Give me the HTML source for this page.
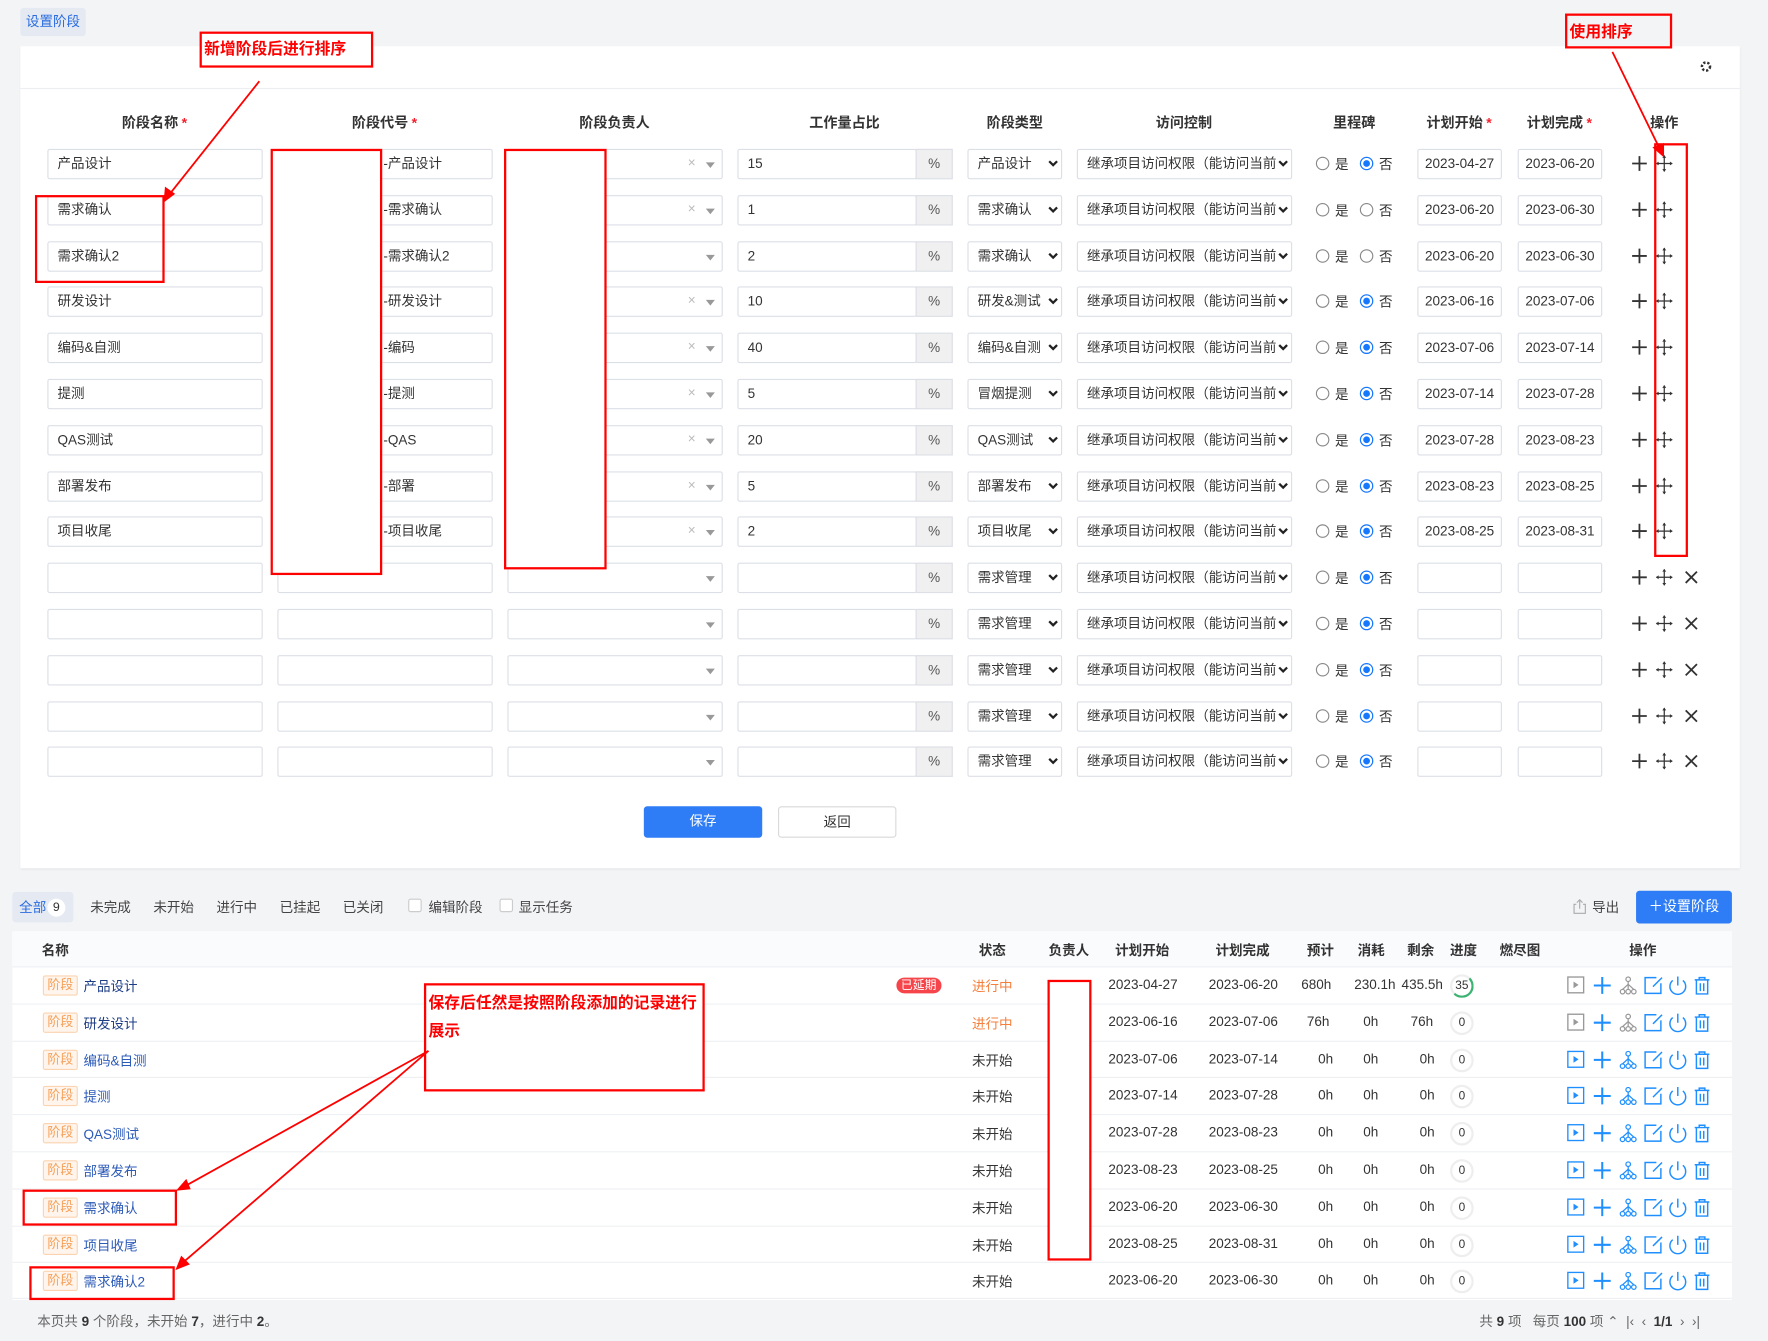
<!DOCTYPE html>
<html><head><meta charset="utf-8">
<style>
*{box-sizing:border-box;margin:0;padding:0}
body{width:1768px;height:1341px;overflow:hidden;background:#f3f4f6;font-family:"Liberation Sans","Noto Sans CJK SC",sans-serif;color:#333}
#w{position:absolute;left:0;top:0;width:1568px;height:1189px;transform:scale(1.12755);transform-origin:0 0;font-size:12px}
.a{position:absolute}
.card{position:absolute;left:18px;top:41px;width:1525px;height:729px;background:#fff;box-shadow:0 1px 2px rgba(0,0,0,.06)}
.hd{position:absolute;top:98px;font-weight:bold;font-size:12.5px;color:#333;transform:translateX(-50%);white-space:nowrap}
.hd i{color:#f5222d;font-style:normal;margin-left:3px}
.r{position:absolute;left:0;width:1568px;height:27px}
.in{position:absolute;top:0;height:27px;border:1px solid #dcdfe6;background:#fff;border-radius:2px;line-height:25px;padding-left:8px;white-space:nowrap;overflow:hidden;font-size:12px;color:#333}
.n{left:42px;width:191px}.c{left:246px;width:191px;padding-left:93px}.o{left:450px;width:191px}.wl{left:654px;width:159px}
.pc{position:absolute;left:812px;top:0;width:33px;height:27px;border:1px solid #dcdfe6;background:#f0f0f0;text-align:center;line-height:25px;color:#555}
.t{left:858px;width:84px}.ac{left:955px;width:191px;padding-right:14px}
.ds{left:1257px;width:75px;text-align:center;padding-left:0}.de{left:1346px;width:75px;text-align:center;padding-left:0}
.cv{position:absolute;top:9px;width:10px;height:8px}
.ox{position:absolute;left:610px;top:5px;color:#bbb;font-size:12px}
.oc{position:absolute;left:626px;top:12px;width:0;height:0;border-left:4px solid transparent;border-right:4px solid transparent;border-top:5px solid #999}
.rd{position:absolute;top:7px;width:12px;height:12px;border-radius:50%;border:1px solid #888;background:#fff}
.rd.on{border:1px solid #1677ff;box-shadow:inset 0 0 0 2px #fff;background:#1677ff}
.rl{position:absolute;top:5px;font-size:12px;color:#333}
.ic{position:absolute;top:5px}
.rb{position:absolute;border:2px solid #f00}
.btn{position:absolute;height:28px;border-radius:3px;text-align:center;line-height:27px;font-size:12px}
.tb{position:absolute;top:796px;font-size:12px;color:#444}
.tbl{position:absolute;left:11px;top:826px;width:1525px;height:327px;background:#fff}
.th{position:absolute;top:834px;font-size:12px;font-weight:bold;color:#333;white-space:nowrap}
.br{position:absolute;left:11px;width:1525px;height:32.8px;border-top:1px solid #eef0f3;font-size:12px}
.br>*{position:absolute;top:8px;white-space:nowrap}
.tag{left:27px;top:7px!important;border:1px solid #fbd3b0;background:#fff5ec;color:#f5a05a;font-size:11.5px;padding:0 3px;height:18px;line-height:16px;border-radius:2px}
.nm{left:63px;color:#2d5bb8}
.st{left:851px}
.d1{left:972px}.d2{left:1061px}
.pg{left:1275px;top:6px!important;width:21px;height:21px;border-radius:50%;border:2px solid #eee;text-align:center;line-height:17px;font-size:10.5px}
.ops{left:1378px;top:7px!important}
</style></head><body><div id="w">

<div class="a" style="left:18px;top:7px;width:58px;height:25px;background:#e4e9f2;border-radius:3px;color:#2a6ce0;text-align:center;line-height:24px;font-size:12px">设置阶段</div>

<div class="card">
 <div class="a" style="left:0;top:37px;width:1525px;height:1px;background:#eceef1"></div>
 <svg class="a" style="left:1489px;top:12px" width="12" height="12" viewBox="0 0 12 12"><circle cx="6" cy="6" r="3.6" fill="none" stroke="#333" stroke-width="2.2" stroke-dasharray="2 1.6"/><circle cx="6" cy="6" r="1.3" fill="#fff"/></svg>
</div>

<div class="hd" style="left:137px">阶段名称<i>*</i></div>
<div class="hd" style="left:341px">阶段代号<i>*</i></div>
<div class="hd" style="left:545px">阶段负责人</div>
<div class="hd" style="left:749px">工作量占比</div>
<div class="hd" style="left:900px">阶段类型</div>
<div class="hd" style="left:1050px">访问控制</div>
<div class="hd" style="left:1201px">里程碑</div>
<div class="hd" style="left:1294px">计划开始<i>*</i></div>
<div class="hd" style="left:1383px">计划完成<i>*</i></div>
<div class="hd" style="left:1476px">操作</div>

<svg width="0" height="0" style="position:absolute"><defs>
<symbol id="cv" viewBox="0 0 10 8"><path d="M1.5 2 L5 5.5 L8.5 2" fill="none" stroke="#222" stroke-width="2"/></symbol>
<symbol id="pl" viewBox="0 0 16 16"><path d="M8 1.5V14.5M1.5 8H14.5" stroke="#333" stroke-width="1.6"/></symbol>
<symbol id="mv" viewBox="0 0 16 16"><path d="M8 1V15M1 8H15" stroke="#333" stroke-width="1.1"/><path d="M8 0.5L6.3 3H9.7ZM8 15.5L6.3 13H9.7ZM0.5 8L3 6.3V9.7ZM15.5 8L13 6.3V9.7Z" fill="#333"/></symbol>
<symbol id="xx" viewBox="0 0 16 16"><path d="M3 3L13 13M13 3L3 13" stroke="#333" stroke-width="1.6"/></symbol>
</defs></svg>

<div class="r" style="top:132px"><div class="in n">产品设计</div><div class="in c">-产品设计</div><div class="in o"></div><span class="ox">×</span><span class="oc"></span><div class="in wl">15</div><div class="pc">%</div><div class="in t">产品设计</div><svg class="cv" style="left:929px"><use href="#cv"/></svg><div class="in ac">继承项目访问权限（能访问当前</div><svg class="cv" style="left:1133px"><use href="#cv"/></svg><span class="rd" style="left:1167px"></span><span class="rl" style="left:1184px">是</span><span class="rd on" style="left:1206px"></span><span class="rl" style="left:1223px">否</span><div class="in ds">2023-04-27</div><div class="in de">2023-06-20</div><svg class="ic" style="left:1446px" width="16" height="16"><use href="#pl"/></svg><svg class="ic" style="left:1468px" width="16" height="16"><use href="#mv"/></svg></div>
<div class="r" style="top:172.8px"><div class="in n">需求确认</div><div class="in c">-需求确认</div><div class="in o"></div><span class="ox">×</span><span class="oc"></span><div class="in wl">1</div><div class="pc">%</div><div class="in t">需求确认</div><svg class="cv" style="left:929px"><use href="#cv"/></svg><div class="in ac">继承项目访问权限（能访问当前</div><svg class="cv" style="left:1133px"><use href="#cv"/></svg><span class="rd" style="left:1167px"></span><span class="rl" style="left:1184px">是</span><span class="rd" style="left:1206px"></span><span class="rl" style="left:1223px">否</span><div class="in ds">2023-06-20</div><div class="in de">2023-06-30</div><svg class="ic" style="left:1446px" width="16" height="16"><use href="#pl"/></svg><svg class="ic" style="left:1468px" width="16" height="16"><use href="#mv"/></svg></div>
<div class="r" style="top:213.6px"><div class="in n">需求确认2</div><div class="in c">-需求确认2</div><div class="in o"></div><span class="oc"></span><div class="in wl">2</div><div class="pc">%</div><div class="in t">需求确认</div><svg class="cv" style="left:929px"><use href="#cv"/></svg><div class="in ac">继承项目访问权限（能访问当前</div><svg class="cv" style="left:1133px"><use href="#cv"/></svg><span class="rd" style="left:1167px"></span><span class="rl" style="left:1184px">是</span><span class="rd" style="left:1206px"></span><span class="rl" style="left:1223px">否</span><div class="in ds">2023-06-20</div><div class="in de">2023-06-30</div><svg class="ic" style="left:1446px" width="16" height="16"><use href="#pl"/></svg><svg class="ic" style="left:1468px" width="16" height="16"><use href="#mv"/></svg></div>
<div class="r" style="top:254.4px"><div class="in n">研发设计</div><div class="in c">-研发设计</div><div class="in o"></div><span class="ox">×</span><span class="oc"></span><div class="in wl">10</div><div class="pc">%</div><div class="in t">研发&amp;测试</div><svg class="cv" style="left:929px"><use href="#cv"/></svg><div class="in ac">继承项目访问权限（能访问当前</div><svg class="cv" style="left:1133px"><use href="#cv"/></svg><span class="rd" style="left:1167px"></span><span class="rl" style="left:1184px">是</span><span class="rd on" style="left:1206px"></span><span class="rl" style="left:1223px">否</span><div class="in ds">2023-06-16</div><div class="in de">2023-07-06</div><svg class="ic" style="left:1446px" width="16" height="16"><use href="#pl"/></svg><svg class="ic" style="left:1468px" width="16" height="16"><use href="#mv"/></svg></div>
<div class="r" style="top:295.2px"><div class="in n">编码&amp;自测</div><div class="in c">-编码</div><div class="in o"></div><span class="ox">×</span><span class="oc"></span><div class="in wl">40</div><div class="pc">%</div><div class="in t">编码&amp;自测</div><svg class="cv" style="left:929px"><use href="#cv"/></svg><div class="in ac">继承项目访问权限（能访问当前</div><svg class="cv" style="left:1133px"><use href="#cv"/></svg><span class="rd" style="left:1167px"></span><span class="rl" style="left:1184px">是</span><span class="rd on" style="left:1206px"></span><span class="rl" style="left:1223px">否</span><div class="in ds">2023-07-06</div><div class="in de">2023-07-14</div><svg class="ic" style="left:1446px" width="16" height="16"><use href="#pl"/></svg><svg class="ic" style="left:1468px" width="16" height="16"><use href="#mv"/></svg></div>
<div class="r" style="top:336px"><div class="in n">提测</div><div class="in c">-提测</div><div class="in o"></div><span class="ox">×</span><span class="oc"></span><div class="in wl">5</div><div class="pc">%</div><div class="in t">冒烟提测</div><svg class="cv" style="left:929px"><use href="#cv"/></svg><div class="in ac">继承项目访问权限（能访问当前</div><svg class="cv" style="left:1133px"><use href="#cv"/></svg><span class="rd" style="left:1167px"></span><span class="rl" style="left:1184px">是</span><span class="rd on" style="left:1206px"></span><span class="rl" style="left:1223px">否</span><div class="in ds">2023-07-14</div><div class="in de">2023-07-28</div><svg class="ic" style="left:1446px" width="16" height="16"><use href="#pl"/></svg><svg class="ic" style="left:1468px" width="16" height="16"><use href="#mv"/></svg></div>
<div class="r" style="top:376.8px"><div class="in n">QAS测试</div><div class="in c">-QAS</div><div class="in o"></div><span class="ox">×</span><span class="oc"></span><div class="in wl">20</div><div class="pc">%</div><div class="in t">QAS测试</div><svg class="cv" style="left:929px"><use href="#cv"/></svg><div class="in ac">继承项目访问权限（能访问当前</div><svg class="cv" style="left:1133px"><use href="#cv"/></svg><span class="rd" style="left:1167px"></span><span class="rl" style="left:1184px">是</span><span class="rd on" style="left:1206px"></span><span class="rl" style="left:1223px">否</span><div class="in ds">2023-07-28</div><div class="in de">2023-08-23</div><svg class="ic" style="left:1446px" width="16" height="16"><use href="#pl"/></svg><svg class="ic" style="left:1468px" width="16" height="16"><use href="#mv"/></svg></div>
<div class="r" style="top:417.6px"><div class="in n">部署发布</div><div class="in c">-部署</div><div class="in o"></div><span class="ox">×</span><span class="oc"></span><div class="in wl">5</div><div class="pc">%</div><div class="in t">部署发布</div><svg class="cv" style="left:929px"><use href="#cv"/></svg><div class="in ac">继承项目访问权限（能访问当前</div><svg class="cv" style="left:1133px"><use href="#cv"/></svg><span class="rd" style="left:1167px"></span><span class="rl" style="left:1184px">是</span><span class="rd on" style="left:1206px"></span><span class="rl" style="left:1223px">否</span><div class="in ds">2023-08-23</div><div class="in de">2023-08-25</div><svg class="ic" style="left:1446px" width="16" height="16"><use href="#pl"/></svg><svg class="ic" style="left:1468px" width="16" height="16"><use href="#mv"/></svg></div>
<div class="r" style="top:458.4px"><div class="in n">项目收尾</div><div class="in c">-项目收尾</div><div class="in o"></div><span class="ox">×</span><span class="oc"></span><div class="in wl">2</div><div class="pc">%</div><div class="in t">项目收尾</div><svg class="cv" style="left:929px"><use href="#cv"/></svg><div class="in ac">继承项目访问权限（能访问当前</div><svg class="cv" style="left:1133px"><use href="#cv"/></svg><span class="rd" style="left:1167px"></span><span class="rl" style="left:1184px">是</span><span class="rd on" style="left:1206px"></span><span class="rl" style="left:1223px">否</span><div class="in ds">2023-08-25</div><div class="in de">2023-08-31</div><svg class="ic" style="left:1446px" width="16" height="16"><use href="#pl"/></svg><svg class="ic" style="left:1468px" width="16" height="16"><use href="#mv"/></svg></div>

<div class="r" style="top:499.2px"><div class="in n"></div><div class="in c"></div><div class="in o"></div><span class="oc"></span><div class="in wl"></div><div class="pc">%</div><div class="in t">需求管理</div><svg class="cv" style="left:929px"><use href="#cv"/></svg><div class="in ac">继承项目访问权限（能访问当前</div><svg class="cv" style="left:1133px"><use href="#cv"/></svg><span class="rd" style="left:1167px"></span><span class="rl" style="left:1184px">是</span><span class="rd on" style="left:1206px"></span><span class="rl" style="left:1223px">否</span><div class="in ds"></div><div class="in de"></div><svg class="ic" style="left:1446px" width="16" height="16"><use href="#pl"/></svg><svg class="ic" style="left:1468px" width="16" height="16"><use href="#mv"/></svg><svg class="ic" style="left:1492px" width="16" height="16"><use href="#xx"/></svg></div>
<div class="r" style="top:540px"><div class="in n"></div><div class="in c"></div><div class="in o"></div><span class="oc"></span><div class="in wl"></div><div class="pc">%</div><div class="in t">需求管理</div><svg class="cv" style="left:929px"><use href="#cv"/></svg><div class="in ac">继承项目访问权限（能访问当前</div><svg class="cv" style="left:1133px"><use href="#cv"/></svg><span class="rd" style="left:1167px"></span><span class="rl" style="left:1184px">是</span><span class="rd on" style="left:1206px"></span><span class="rl" style="left:1223px">否</span><div class="in ds"></div><div class="in de"></div><svg class="ic" style="left:1446px" width="16" height="16"><use href="#pl"/></svg><svg class="ic" style="left:1468px" width="16" height="16"><use href="#mv"/></svg><svg class="ic" style="left:1492px" width="16" height="16"><use href="#xx"/></svg></div>
<div class="r" style="top:580.8px"><div class="in n"></div><div class="in c"></div><div class="in o"></div><span class="oc"></span><div class="in wl"></div><div class="pc">%</div><div class="in t">需求管理</div><svg class="cv" style="left:929px"><use href="#cv"/></svg><div class="in ac">继承项目访问权限（能访问当前</div><svg class="cv" style="left:1133px"><use href="#cv"/></svg><span class="rd" style="left:1167px"></span><span class="rl" style="left:1184px">是</span><span class="rd on" style="left:1206px"></span><span class="rl" style="left:1223px">否</span><div class="in ds"></div><div class="in de"></div><svg class="ic" style="left:1446px" width="16" height="16"><use href="#pl"/></svg><svg class="ic" style="left:1468px" width="16" height="16"><use href="#mv"/></svg><svg class="ic" style="left:1492px" width="16" height="16"><use href="#xx"/></svg></div>
<div class="r" style="top:621.6px"><div class="in n"></div><div class="in c"></div><div class="in o"></div><span class="oc"></span><div class="in wl"></div><div class="pc">%</div><div class="in t">需求管理</div><svg class="cv" style="left:929px"><use href="#cv"/></svg><div class="in ac">继承项目访问权限（能访问当前</div><svg class="cv" style="left:1133px"><use href="#cv"/></svg><span class="rd" style="left:1167px"></span><span class="rl" style="left:1184px">是</span><span class="rd on" style="left:1206px"></span><span class="rl" style="left:1223px">否</span><div class="in ds"></div><div class="in de"></div><svg class="ic" style="left:1446px" width="16" height="16"><use href="#pl"/></svg><svg class="ic" style="left:1468px" width="16" height="16"><use href="#mv"/></svg><svg class="ic" style="left:1492px" width="16" height="16"><use href="#xx"/></svg></div>
<div class="r" style="top:662.4px"><div class="in n"></div><div class="in c"></div><div class="in o"></div><span class="oc"></span><div class="in wl"></div><div class="pc">%</div><div class="in t">需求管理</div><svg class="cv" style="left:929px"><use href="#cv"/></svg><div class="in ac">继承项目访问权限（能访问当前</div><svg class="cv" style="left:1133px"><use href="#cv"/></svg><span class="rd" style="left:1167px"></span><span class="rl" style="left:1184px">是</span><span class="rd on" style="left:1206px"></span><span class="rl" style="left:1223px">否</span><div class="in ds"></div><div class="in de"></div><svg class="ic" style="left:1446px" width="16" height="16"><use href="#pl"/></svg><svg class="ic" style="left:1468px" width="16" height="16"><use href="#mv"/></svg><svg class="ic" style="left:1492px" width="16" height="16"><use href="#xx"/></svg></div>

<div class="btn" style="left:571px;top:715px;width:105px;background:#2e7cf6;color:#fff">保存</div>
<div class="btn" style="left:690px;top:715px;width:105px;border:1px solid #d9d9d9;background:#fff;color:#333">返回</div>

<div class="rb" style="left:240px;top:132px;width:99px;height:378px;background:#fff"></div>
<div class="rb" style="left:447px;top:132px;width:91px;height:373px;background:#fff"></div>
<div class="rb" style="left:31px;top:173px;width:115px;height:78px"></div>
<div class="rb" style="left:177px;top:28px;width:154px;height:32px;background:#fff;color:#f00;font-weight:bold;font-size:14px;padding:3px 0 0 2px">新增阶段后进行排序</div>
<div class="rb" style="left:1388px;top:12px;width:95px;height:31px;color:#f00;font-weight:bold;font-size:14px;padding:4px 0 0 2px">使用排序</div>
<div class="rb" style="left:1467px;top:127px;width:30px;height:367px"></div>

<div class="a" style="left:11px;top:791px;width:54px;height:27px;background:#e4e9f2;border-radius:3px"></div>
<div class="tb" style="left:17px;color:#2a6ce0">全部</div>
<div class="a" style="left:42px;top:797px;width:16px;height:16px;border-radius:50%;background:#fff;font-size:11px;text-align:center;line-height:16px">9</div>
<div class="tb" style="left:80px">未完成</div>
<div class="tb" style="left:136px">未开始</div>
<div class="tb" style="left:192px">进行中</div>
<div class="tb" style="left:248px">已挂起</div>
<div class="tb" style="left:304px">已关闭</div>
<div class="a" style="left:362px;top:797px;width:12px;height:12px;border:1px solid #ccc;border-radius:2px;background:#fff"></div>
<div class="tb" style="left:380px">编辑阶段</div>
<div class="a" style="left:443px;top:797px;width:12px;height:12px;border:1px solid #ccc;border-radius:2px;background:#fff"></div>
<div class="tb" style="left:460px">显示任务</div>
<svg class="a" style="left:1394px;top:797px" width="14" height="14" viewBox="0 0 14 14"><path d="M4 5H2V13H12V5H10M7 9V1M4.5 3.5L7 1L9.5 3.5" fill="none" stroke="#aaa"/></svg>
<div class="tb" style="left:1412px">导出</div>
<div class="btn" style="left:1451px;top:790px;width:85px;height:29px;background:#2e7cf6;color:#fff;line-height:29px;font-size:12.5px">＋设置阶段</div>

<div class="tbl"></div>
<div class="a" style="left:11px;top:826px;width:1525px;height:32px;background:#fafbfd"></div>
<div class="th" style="left:37px">名称</div>
<div class="th" style="left:868px">状态</div>
<div class="th" style="left:930px">负责人</div>
<div class="th" style="left:989px">计划开始</div>
<div class="th" style="left:1078px">计划完成</div>
<div class="th" style="left:1159px">预计</div>
<div class="th" style="left:1204px">消耗</div>
<div class="th" style="left:1248px">剩余</div>
<div class="th" style="left:1286px">进度</div>
<div class="th" style="left:1330px">燃尽图</div>
<div class="th" style="left:1445px">操作</div>

<svg width="0" height="0" style="position:absolute"><defs>
<symbol id="ops" viewBox="0 0 140 18">
<rect x="1.5" y="1.5" width="14" height="14" fill="none" stroke="currentColor" stroke-width="1.2"/><path d="M6.5 5.5L11 8.5L6.5 11.5Z" fill="currentColor"/>
<path d="M32 1.5V16.5M24.5 9H39.5" stroke="#1f8fff" stroke-width="1.8"/>
<g fill="none" stroke="currentColor" stroke-width="1.1"><circle cx="55" cy="3.5" r="2"/><circle cx="50" cy="14.5" r="2"/><circle cx="55" cy="14.5" r="2"/><circle cx="60" cy="14.5" r="2"/><path d="M55 5.5V12.5M55 8L50 12.5M55 8L60 12.5"/></g>
<g fill="none" stroke="#1f8fff" stroke-width="1.3"><path d="M80 2H70V16H84V7"/><path d="M77 10L85 2"/></g>
<g fill="none" stroke="#1f8fff" stroke-width="1.3"><path d="M94.5 4.5A7 7 0 1 0 103.5 4.5"/><path d="M99 1V9"/></g>
<g fill="none" stroke="#1f8fff" stroke-width="1.3"><path d="M114 4H127M118 4V2H123V4M115.5 4V16.5H125.5V4M119 7V14M122 7V14"/></g>
</symbol></defs></svg>

<div class="br" style="top:857px"><span class="tag">阶段</span><span class="nm" style="color:#1d3d85">产品设计</span><span style="left:784px;top:9px;background:#f5454a;color:#fff;font-size:10.5px;padding:0 4px;border-radius:7px;line-height:14px">已延期</span><span class="st" style="color:#f5803e">进行中</span><span class="d1">2023-04-27</span><span class="d2">2023-06-20</span><span style="left:1143px">680h</span><span style="left:1190px">230.1h</span><span style="left:1232px">435.5h</span><span class="pg" style="border-color:#eee #3cb371 #3cb371 #eee">35</span><svg class="ops" width="140" height="18" style="color:#999"><use href="#ops"/></svg></div>
<div class="br" style="top:889.8px"><span class="tag">阶段</span><span class="nm" style="color:#1d3d85">研发设计</span><span class="st" style="color:#f5803e">进行中</span><span class="d1">2023-06-16</span><span class="d2">2023-07-06</span><span style="left:1148px">76h</span><span style="left:1198px">0h</span><span style="left:1240px">76h</span><span class="pg">0</span><svg class="ops" width="140" height="18" style="color:#999"><use href="#ops"/></svg></div>
<div class="br" style="top:922.6px"><span class="tag">阶段</span><span class="nm">编码&amp;自测</span><span class="st">未开始</span><span class="d1">2023-07-06</span><span class="d2">2023-07-14</span><span style="left:1158px">0h</span><span style="left:1198px">0h</span><span style="left:1248px">0h</span><span class="pg">0</span><svg class="ops" width="140" height="18" style="color:#1f8fff"><use href="#ops"/></svg></div>
<div class="br" style="top:955.4px"><span class="tag">阶段</span><span class="nm">提测</span><span class="st">未开始</span><span class="d1">2023-07-14</span><span class="d2">2023-07-28</span><span style="left:1158px">0h</span><span style="left:1198px">0h</span><span style="left:1248px">0h</span><span class="pg">0</span><svg class="ops" width="140" height="18" style="color:#1f8fff"><use href="#ops"/></svg></div>
<div class="br" style="top:988.2px"><span class="tag">阶段</span><span class="nm">QAS测试</span><span class="st">未开始</span><span class="d1">2023-07-28</span><span class="d2">2023-08-23</span><span style="left:1158px">0h</span><span style="left:1198px">0h</span><span style="left:1248px">0h</span><span class="pg">0</span><svg class="ops" width="140" height="18" style="color:#1f8fff"><use href="#ops"/></svg></div>
<div class="br" style="top:1021px"><span class="tag">阶段</span><span class="nm">部署发布</span><span class="st">未开始</span><span class="d1">2023-08-23</span><span class="d2">2023-08-25</span><span style="left:1158px">0h</span><span style="left:1198px">0h</span><span style="left:1248px">0h</span><span class="pg">0</span><svg class="ops" width="140" height="18" style="color:#1f8fff"><use href="#ops"/></svg></div>
<div class="br" style="top:1053.8px"><span class="tag">阶段</span><span class="nm">需求确认</span><span class="st">未开始</span><span class="d1">2023-06-20</span><span class="d2">2023-06-30</span><span style="left:1158px">0h</span><span style="left:1198px">0h</span><span style="left:1248px">0h</span><span class="pg">0</span><svg class="ops" width="140" height="18" style="color:#1f8fff"><use href="#ops"/></svg></div>
<div class="br" style="top:1086.6px"><span class="tag">阶段</span><span class="nm">项目收尾</span><span class="st">未开始</span><span class="d1">2023-08-25</span><span class="d2">2023-08-31</span><span style="left:1158px">0h</span><span style="left:1198px">0h</span><span style="left:1248px">0h</span><span class="pg">0</span><svg class="ops" width="140" height="18" style="color:#1f8fff"><use href="#ops"/></svg></div>
<div class="br" style="top:1119.4px;border-bottom:1px solid #eef0f3"><span class="tag">阶段</span><span class="nm">需求确认2</span><span class="st">未开始</span><span class="d1">2023-06-20</span><span class="d2">2023-06-30</span><span style="left:1158px">0h</span><span style="left:1198px">0h</span><span style="left:1248px">0h</span><span class="pg">0</span><svg class="ops" width="140" height="18" style="color:#1f8fff"><use href="#ops"/></svg></div>

<div class="a" style="left:33px;top:1163px;font-size:12px;color:#666">本页共 <b style="color:#333">9</b> 个阶段，未开始 <b style="color:#333">7</b>，进行中 <b style="color:#333">2</b>。</div>
<div class="a" style="left:1312px;top:1163px;font-size:12px;color:#666;white-space:nowrap">共 <b style="color:#333">9</b> 项 &nbsp; 每页 <b style="color:#333">100</b> 项 ⌃ &nbsp;|‹ &nbsp;‹ &nbsp;<b style="color:#333">1/1</b> &nbsp;› &nbsp;›|</div>

<div class="rb" style="left:929px;top:869px;width:39px;height:249px;background:#fff"></div>
<div class="rb" style="left:376px;top:872px;width:249px;height:96px;background:#fff;color:#f00;font-weight:bold;font-size:14px;line-height:25px;padding:3px 0 0 2px">保存后任然是按照阶段添加的记录进行展示</div>
<div class="rb" style="left:20px;top:1055px;width:137px;height:32px"></div>
<div class="rb" style="left:26px;top:1123px;width:129px;height:30px"></div>

<svg class="a" style="left:0;top:0;pointer-events:none" width="1568" height="1189">
<g stroke="#f00" stroke-width="1.6" fill="#f00">
<line x1="230" y1="72" x2="149" y2="174"/><path d="M146 178L147 167L154 172Z"/>
<line x1="1430" y1="46" x2="1472" y2="132"/><path d="M1475 138L1467 131L1475 128Z"/>
<line x1="380" y1="932" x2="164" y2="1052"/><path d="M158 1055L165 1047L168 1054Z"/>
<line x1="380" y1="932" x2="162" y2="1120"/><path d="M157 1125L161 1115L167 1121Z"/>
</g></svg>

</div></body></html>
